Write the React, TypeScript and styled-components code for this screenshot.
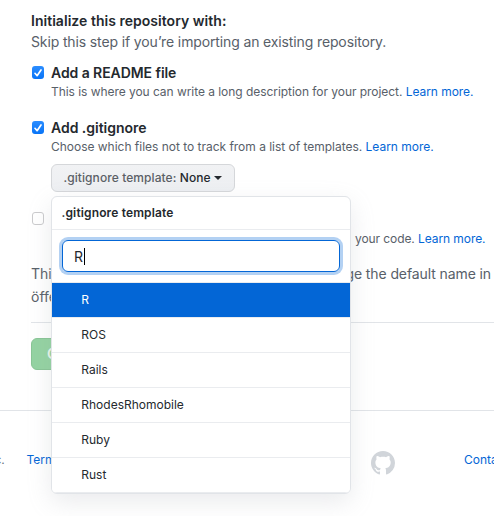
import React from "react";
import styled, { createGlobalStyle } from "styled-components";

const Global = createGlobalStyle`
  * { box-sizing: border-box; }
  body {
    margin: 0;
    background: #fff;
    color: #24292e;
    font-family: Inter, "Liberation Sans", sans-serif;
    font-size: 14px;
    line-height: 21px;
    overflow: hidden;
  }
`;

const Page = styled.div`
  width: 494px;
  height: 516px;
  overflow: hidden;
  white-space: nowrap;
`;

const Form = styled.main`
  height: 410px;
  padding: 10px 0 0 31px;
`;

const Heading = styled.div<{ $spacing: number }>`
  font-size: 14px;
  font-weight: 600;
  line-height: 21px;
  letter-spacing: ${(p) => p.$spacing}px;
`;

const Lead = styled.div`
  color: #586069;
  letter-spacing: -0.13px;
`;

const Option = styled.section<{ $top: number }>`
  display: grid;
  grid-template-columns: 20px 1fr;
  margin-top: ${(p) => p.$top}px;
`;

const Box = styled.span<{ $checked?: boolean }>`
  display: grid;
  place-items: center;
  width: 12px;
  height: 13px;
  margin: ${(p) => (p.$checked ? 4 : 3)}px 0 0 1px;
  border: ${(p) => (p.$checked ? "0" : "1px solid #cbcbcd")};
  border-radius: 3px;
  background: ${(p) => (p.$checked ? "linear-gradient(#2b8dff, #0874f7)" : "#fff")};
`;

const Note = styled.div<{ $spacing: number; $left?: number }>`
  height: 18px;
  padding-left: ${(p) => p.$left ?? 0}px;
  color: #586069;
  font-size: 12px;
  line-height: 18px;
  letter-spacing: ${(p) => p.$spacing}px;
`;

const Link = styled.a`
  color: #0366d6;
`;

const Picker = styled.div`
  position: relative;
  height: 28px;
  margin-top: 8px;
`;

const PickerButton = styled.button`
  display: flex;
  align-items: center;
  width: 184px;
  height: 28px;
  padding: 0 11.5px;
  border: 1px solid #d5d7da;
  border-radius: 6px;
  background: linear-gradient(#f1f2f4, #edeff2);
  color: #24292e;
  font: 500 12px/20px Inter, sans-serif;
  letter-spacing: 0.08px;
  white-space: pre;
`;

const Muted = styled.span`
  color: #5b6066;
`;

const Caret = styled.span`
  margin-left: 3.5px;
  border: 4px solid transparent;
  border-top-color: #24292e;
  border-bottom: 0;
`;

const Menu = styled.div`
  position: absolute;
  z-index: 2;
  top: 32px;
  left: 0;
  width: 300px;
  height: 298px;
  overflow: hidden;
  border: 1px solid #e1e4e8;
  border-radius: 6px;
  background: #fff;
  color: #24292e;
  box-shadow: 0 8px 24px rgba(149, 157, 165, 0.2);
`;

const MenuTitle = styled.header`
  height: 33px;
  padding: 0 9.5px;
  border-bottom: 1px solid #eaecef;
  font-size: 12px;
  font-weight: 600;
  line-height: 31px;
  letter-spacing: 0.14px;
`;

const Search = styled.div`
  height: 53px;
  padding: 10px;
  border-bottom: 1px solid #eaecef;
`;

const Field = styled.div`
  display: flex;
  align-items: center;
  height: 32px;
  padding: 0 11px;
  border: 1px solid #0366d6;
  border-radius: 6px;
  box-shadow: 0 0 0 3px rgba(3, 102, 214, 0.3);
`;

const Cursor = styled.span`
  width: 1px;
  height: 17px;
  margin-left: 1px;
  background: #000;
`;

const Item = styled.div<{ $active?: boolean }>`
  height: 35px;
  padding-left: 29.3px;
  border-bottom: 1px solid #eaecef;
  background: ${(p) => (p.$active ? "#0366d6" : "#fff")};
  background-clip: padding-box;
  color: ${(p) => (p.$active ? "#fff" : "#24292e")};
  font-size: 12px;
  line-height: 34px;
`;

const BranchNote = styled.div`
  display: flex;
  justify-content: space-between;
  margin-top: 14px;
  padding-right: 3px;
  color: #586069;
  line-height: 23px;
`;

const BranchTail = styled.div`
  letter-spacing: -0.1px;
`;

const Submit = styled.button`
  display: block;
  width: 140px;
  height: 32px;
  margin-top: 15px;
  padding: 0 15px;
  border: 1px solid #89c596;
  border-radius: 6px;
  background: #94d3a2;
  color: rgba(255, 255, 255, 0.8);
  font: 600 14px/20px Inter, sans-serif;
  text-align: left;
`;

const Rule = styled.div`
  height: 1px;
  margin-top: 14px;
  background: #e1e4e8;
`;

const Footer = styled.footer`
  display: grid;
  grid-template-columns: 26.5px 344.5px 93px auto;
  align-items: center;
  height: 98px;
  border-top: 1px solid #e1e4e8;
  color: #6a737d;
  font-size: 12px;
`;

const Tail = styled.span`
  margin-left: -5.5px;
`;

const Mark = styled.svg`
  margin-top: 6px;
`;

const Check = () => (
  <svg width="12" height="12" viewBox="0 0 12 12" fill="none" stroke="#fff" strokeWidth="1.7" strokeLinecap="round" strokeLinejoin="round">
    <path d="M3 6.3 5.1 8.7 9 3" />
  </svg>
);

const Octocat = () => (
  <Mark width="24" height="24" viewBox="0 0 16 16" fill="#d1d5da">
    <path d="M8 0C3.58 0 0 3.58 0 8c0 3.54 2.29 6.53 5.47 7.59.4.07.55-.17.55-.38 0-.19-.01-.82-.01-1.49-2.01.37-2.53-.49-2.69-.94-.09-.23-.48-.94-.82-1.13-.28-.15-.68-.52-.01-.53.63-.01 1.08.58 1.23.82.72 1.21 1.87.87 2.33.66.07-.52.28-.87.51-1.07-1.78-.2-3.64-.89-3.64-3.95 0-.87.31-1.59.82-2.15-.08-.2-.36-1.02.08-2.12 0 0 .67-.21 2.2.82.64-.18 1.32-.27 2-.27s1.36.09 2 .27c1.53-1.04 2.2-.82 2.2-.82.44 1.1.16 1.92.08 2.12.51.56.82 1.27.82 2.15 0 3.07-1.87 3.75-3.65 3.95.29.25.54.73.54 1.48 0 1.07-.01 1.93-.01 2.2 0 .21.15.46.55.38A8.01 8.01 0 0 0 16 8c0-4.42-3.58-8-8-8Z" />
  </Mark>
);

const templates = ["R", "ROS", "Rails", "RhodesRhomobile", "Ruby", "Rust"];

export default function App() {
  return (
    <>
      <Global />
      <Page>
        <Form>
          <Heading $spacing={0.03}>Initialize this repository with:</Heading>
          <Lead>Skip this step if you’re importing an existing repository.</Lead>

          <Option $top={10}>
            <Box $checked><Check /></Box>
            <div>
              <Heading $spacing={-0.07}>Add a README file</Heading>
              <Note $spacing={-0.05}>
                This is where you can write a long description for your project. <Link>Learn more.</Link>
              </Note>
            </div>
          </Option>

          <Option $top={16}>
            <Box $checked><Check /></Box>
            <div>
              <Heading $spacing={-0.03}>Add .gitignore</Heading>
              <Note $spacing={-0.02}>
                Choose which files not to track from a list of templates. <Link>Learn more.</Link>
              </Note>
              <Picker>
                <PickerButton>
                  <Muted>.gitignore template: </Muted>None<Caret />
                </PickerButton>
                <Menu>
                  <MenuTitle>.gitignore template</MenuTitle>
                  <Search>
                    <Field>R<Cursor /></Field>
                  </Search>
                  {templates.map((name, i) => (
                    <Item key={name} $active={i === 0}>{name}</Item>
                  ))}
                </Menu>
              </Picker>
            </div>
          </Option>

          <Option $top={17}>
            <Box />
            <div>
              <Heading $spacing={0}>&nbsp;</Heading>
              <Note $spacing={-0.08} $left={304}>
                your code. <Link>Learn more.</Link>
              </Note>
            </div>
          </Option>

          <BranchNote>
            <div>This<br />öffe</div>
            <BranchTail>ge the default name in</BranchTail>
          </BranchNote>
          <Rule />
          <Submit>C</Submit>
        </Form>
        <Footer>
          <Tail>c.</Tail>
          <Link>Terms</Link>
          <Octocat />
          <Link>Contact</Link>
        </Footer>
      </Page>
    </>
  );
}
